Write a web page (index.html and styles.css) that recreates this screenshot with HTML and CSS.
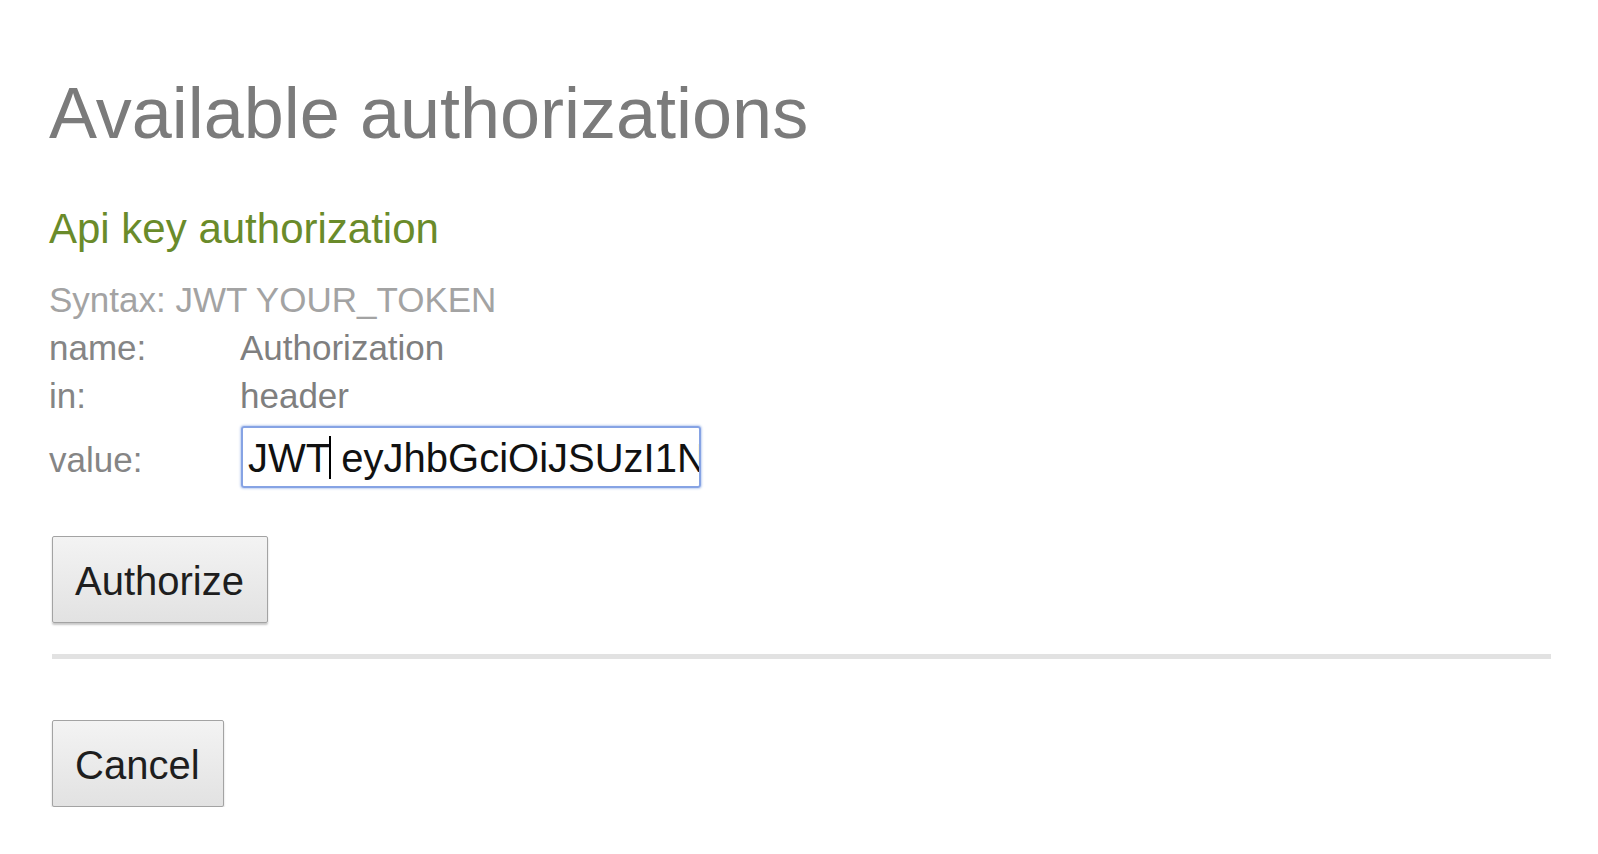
FILE: index.html
```html
<!DOCTYPE html>
<html lang="en">
<head>
<meta charset="utf-8">
<title>Available authorizations</title>
<link rel="stylesheet" href="styles.css">
</head>
<body>
<div class="dialog">
  <h1 class="title">Available authorizations</h1>
  <section class="auth">
    <h2 class="auth-name">Api key authorization</h2>
    <div class="fields">
      <div class="syntax">Syntax: JWT YOUR_TOKEN</div>
      <div class="row"><span class="label">name:</span><span class="val">Authorization</span></div>
      <div class="row"><span class="label">in:</span><span class="val">header</span></div>
      <div class="row row-value"><span class="label">value:</span><div class="input" role="textbox">JWT<span class="caret"></span> eyJhbGciOiJSUzI1NiIsInR5cCI6IkpXVCJ9</div></div>
    </div>
  </section>
  <button class="btn btn-auth" type="button">Authorize</button>
  <hr class="divider">
  <button class="btn btn-cancel" type="button">Cancel</button>
</div>
</body>
</html>
```
FILE: styles.css
```css
html, body {
  margin: 0;
  padding: 0;
  background: #ffffff;
}

body {
  font-family: "Liberation Sans", Arial, sans-serif;
}

.dialog {
  display: flex;
  flex-direction: column;
  align-items: flex-start;
  padding: 73px 47px 0 49px;
}

.title {
  margin: 0;
  font-size: 72px;
  line-height: 80px;
  font-weight: normal;
  color: #7b7b7b;
}

.auth {
  margin-top: 52px;
}

.auth-name {
  margin: 0;
  font-size: 42px;
  line-height: 48px;
  font-weight: normal;
  color: #6a8b2a;
}

.fields {
  margin-top: 23px;
  display: flex;
  flex-direction: column;
  font-size: 35px;
  line-height: 48px;
}

.syntax {
  color: #a3a3a3;
}

.row {
  display: flex;
  align-items: baseline;
  color: #858585;
}

.label {
  width: 191px;
  flex: none;
}

.val {
  color: #7f7f7f;
}

.row-value {
  margin-top: 6px;
}

.input {
  box-sizing: border-box;
  width: 460px;
  height: 62px;
  margin-left: 1px;
  padding: 2px 5px 0 5px;
  border: 2px solid #86a3e4;
  border-radius: 3px;
  box-shadow: 0 0 2px 1px rgba(120, 155, 225, 0.45);
  font-size: 40px;
  line-height: 56px;
  color: #111111;
  white-space: nowrap;
  overflow: hidden;
}

.caret {
  display: inline-block;
  width: 2px;
  height: 43px;
  margin-left: -1px;
  margin-right: -1px;
  vertical-align: -7px;
  background: #000000;
}

.btn {
  box-sizing: border-box;
  margin-left: 3px;
  padding: 21px 23px 18px 22px;
  border: 1px solid #a3a3a3;
  border-radius: 2px;
  background: linear-gradient(#f3f3f3, #e2e2e2);
  box-shadow: 0 2px 2px rgba(0, 0, 0, 0.22);
  font-family: "Liberation Sans", Arial, sans-serif;
  font-size: 40px;
  line-height: 46px;
  color: #1e1e1e;
}

.btn-auth {
  margin-top: 48px;
}

.divider {
  align-self: stretch;
  margin: 31px 0 0 3px;
  height: 5px;
  border: none;
  background: #e2e2e2;
}

.btn-cancel {
  margin-top: 61px;
}
```
